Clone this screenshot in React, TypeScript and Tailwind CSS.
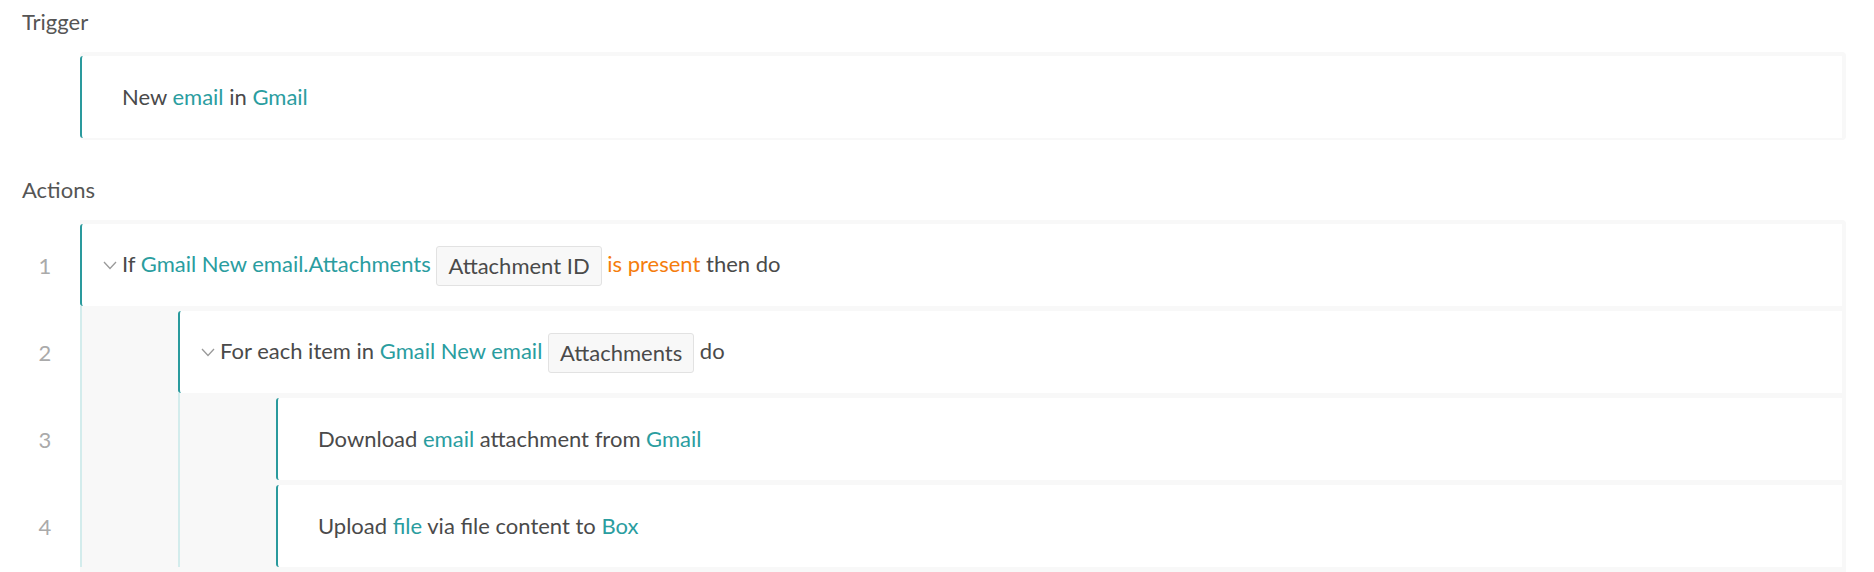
import React from "react";

const T = ({ children }: { children: React.ReactNode }) => (
  <span className="text-[#2a9d9f]">{children}</span>
);
const O = ({ children }: { children: React.ReactNode }) => (
  <span className="text-[#f57d0d]">{children}</span>
);
const Pill = ({ children }: { children: React.ReactNode }) => (
  <span className="inline-block h-[40px] px-[11px] leading-[38px] border border-[#e2e2e2] bg-[#f8f8f8] rounded-[3px] align-middle">
    {children}
  </span>
);

const Chevron = () => (
  <svg width="14" height="9" viewBox="0 0 14 9" className="shrink-0">
    <polyline points="1,1 7,7.5 13,1" fill="none" stroke="#9a9a9a" strokeWidth="1.3" />
  </svg>
);

const Card = ({ chevron, children }: { chevron?: boolean; children: React.ReactNode }) => (
  <div className="h-[82px] bg-white border-l-2 border-[#2a9a9d] rounded-l-[3px] flex items-center pl-[21px]">
    {chevron ? <Chevron /> : <span className="w-[14px] shrink-0" />}
    <div className="ml-[5px] whitespace-pre leading-[40px] text-[#4a4a4a]">{children}</div>
  </div>
);

const Children = ({ children }: { children: React.ReactNode }) => (
  <div className="border-l-2 border-[#d3ecec] pl-[96px] pt-[5px] flex flex-col gap-[5px]">
    {children}
  </div>
);

export default function App() {
  return (
    <div className="w-[1874px] h-[572px] overflow-hidden bg-white font-['Lato','Noto_Sans',sans-serif] text-[22px] text-[#4a4a4a]">
      <div className="h-[52px] pt-[9px] pl-[22px] leading-[26px] text-[#555]">Trigger</div>
      <div className="ml-[80px] mr-[28px] bg-[#f8f8f8] rounded-[4px] pt-[4px] pr-[4px] pb-[2px]">
        <Card>
          {"New "}
          <T>email</T>
          {" in "}
          <T>Gmail</T>
        </Card>
      </div>
      <div className="h-[80px] pt-[37px] pl-[22px] leading-[26px] text-[#555]">Actions</div>
      <div className="flex mr-[28px]">
        <div className="w-[80px] shrink-0 pt-[4px] flex flex-col gap-[5px] text-[#aaa]">
          {["1", "2", "3", "4"].map((n) => (
            <div key={n} className="h-[82px] flex items-center justify-center pl-[10px]">
              {n}
            </div>
          ))}
        </div>
        <div className="flex-1 bg-[#f8f8f8] rounded-tr-[4px] pt-[4px] pr-[4px] pb-[6px]">
          <div>
            <Card chevron>
              {"If "}
              <T>Gmail New email.Attachments</T>
              {" "}
              <Pill>Attachment ID</Pill>
              {" "}
              <O>is present</O>
              {" then do"}
            </Card>
            <Children>
              <div>
                <Card chevron>
                  {"For each item in "}
                  <T>Gmail New email</T>
                  {" "}
                  <Pill>Attachments</Pill>
                  {" do"}
                </Card>
                <Children>
                  <Card>
                    {"Download "}
                    <T>email</T>
                    {" attachment from "}
                    <T>Gmail</T>
                  </Card>
                  <Card>
                    {"Upload "}
                    <T>file</T>
                    {" via file content to "}
                    <T>Box</T>
                  </Card>
                </Children>
              </div>
            </Children>
          </div>
        </div>
      </div>
    </div>
  );
}
